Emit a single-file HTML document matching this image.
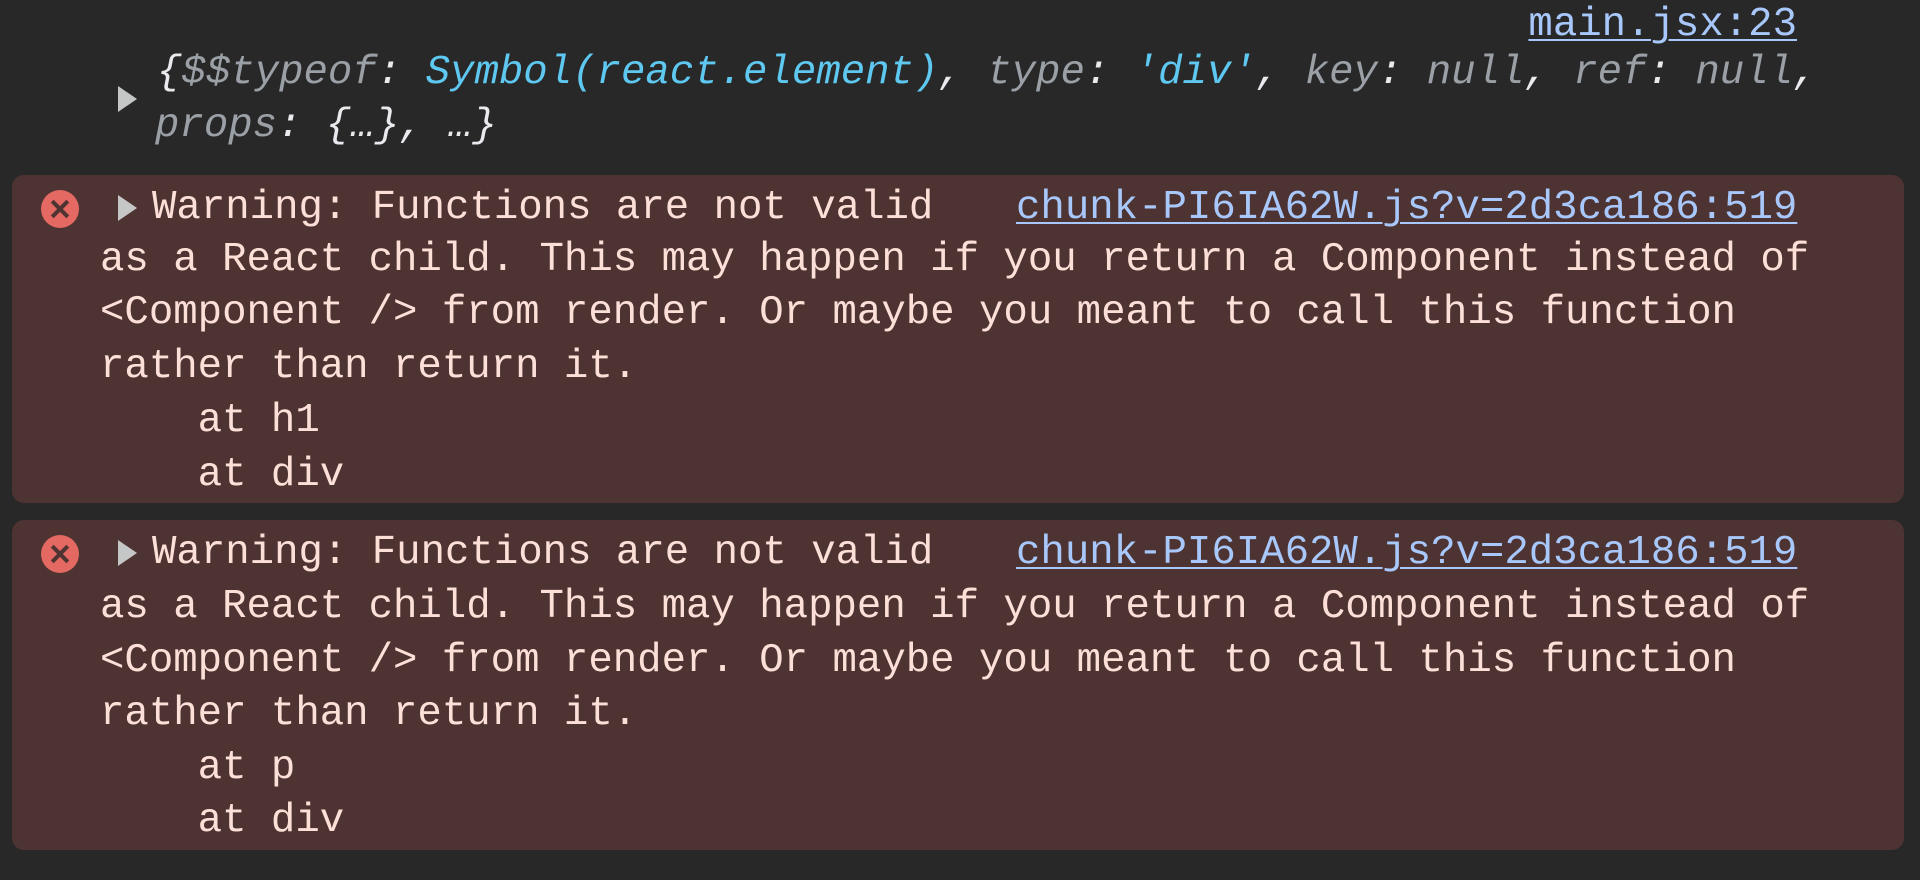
<!DOCTYPE html>
<html><head><meta charset="utf-8"><style>
html,body{margin:0;padding:0;width:1920px;height:880px;background:#282828;overflow:hidden}
.l{position:absolute;height:54px;line-height:54px;font-family:"Liberation Mono",monospace;font-size:40.7px;white-space:pre;color:#fce0d8}
.box{position:absolute;left:12px;width:1892px;background:#4e3333;border-radius:12px}
a{color:#a8c7fa;text-decoration:underline;text-decoration-thickness:2px;text-underline-offset:4px}
.i{font-style:italic}
.g{color:#9aa0a6}.c{color:#5ec8f0}.w{color:#e8eaed}
.ic{position:absolute;width:38px;height:38px;border-radius:50%;background:#e46962}
.ic:before,.ic:after{content:"";position:absolute;left:8px;top:17px;width:22px;height:4px;background:#4e3333;transform:rotate(45deg)}
.ic:after{transform:rotate(-45deg)}
.tri{position:absolute;width:0;height:0;border-top:13px solid transparent;border-bottom:13px solid transparent;border-left:19px solid #c4c7c5}
</style></head><body>
<div class="l" style="top:-2px;right:123px"><a>main.jsx:23</a></div>
<div class="tri" style="left:118px;top:86px"></div>
<div class="l i" style="top:46px;left:157px"><span class="w">{</span><span class="g">$$typeof</span><span class="w">: </span><span class="c">Symbol(react.element)</span><span class="w">, </span><span class="g">type</span><span class="w">: </span><span class="c">'div'</span><span class="w">, </span><span class="g">key</span><span class="w">: </span><span class="g">null</span><span class="w">, </span><span class="g">ref</span><span class="w">: </span><span class="g">null</span><span class="w">,</span></div>
<div class="l i" style="top:99px;left:155px"><span class="g">props</span><span class="w">: {…}, …}</span></div>

<div class="box" style="top:175px;height:328px"></div>
<div class="ic" style="left:41px;top:190px"></div>
<div class="tri" style="left:118px;top:195px"></div>
<div class="l" style="top:181px;left:152px">Warning: Functions are not valid</div>
<div class="l" style="top:181px;left:1016px"><a>chunk-PI6IA62W.js?v=2d3ca186:519</a></div>
<div class="l" style="top:233px;left:100px">as a React child. This may happen if you return a Component instead of</div>
<div class="l" style="top:286px;left:100px">&lt;Component /&gt; from render. Or maybe you meant to call this function</div>
<div class="l" style="top:340px;left:100px">rather than return it.</div>
<div class="l" style="top:394px;left:100px">    at h1</div>
<div class="l" style="top:448px;left:100px">    at div</div>

<div class="box" style="top:520px;height:330px"></div>
<div class="ic" style="left:41px;top:535px"></div>
<div class="tri" style="left:118px;top:540px"></div>
<div class="l" style="top:526px;left:152px">Warning: Functions are not valid</div>
<div class="l" style="top:526px;left:1016px"><a>chunk-PI6IA62W.js?v=2d3ca186:519</a></div>
<div class="l" style="top:580px;left:100px">as a React child. This may happen if you return a Component instead of</div>
<div class="l" style="top:634px;left:100px">&lt;Component /&gt; from render. Or maybe you meant to call this function</div>
<div class="l" style="top:687px;left:100px">rather than return it.</div>
<div class="l" style="top:741px;left:100px">    at p</div>
<div class="l" style="top:794px;left:100px">    at div</div>
</body></html>
